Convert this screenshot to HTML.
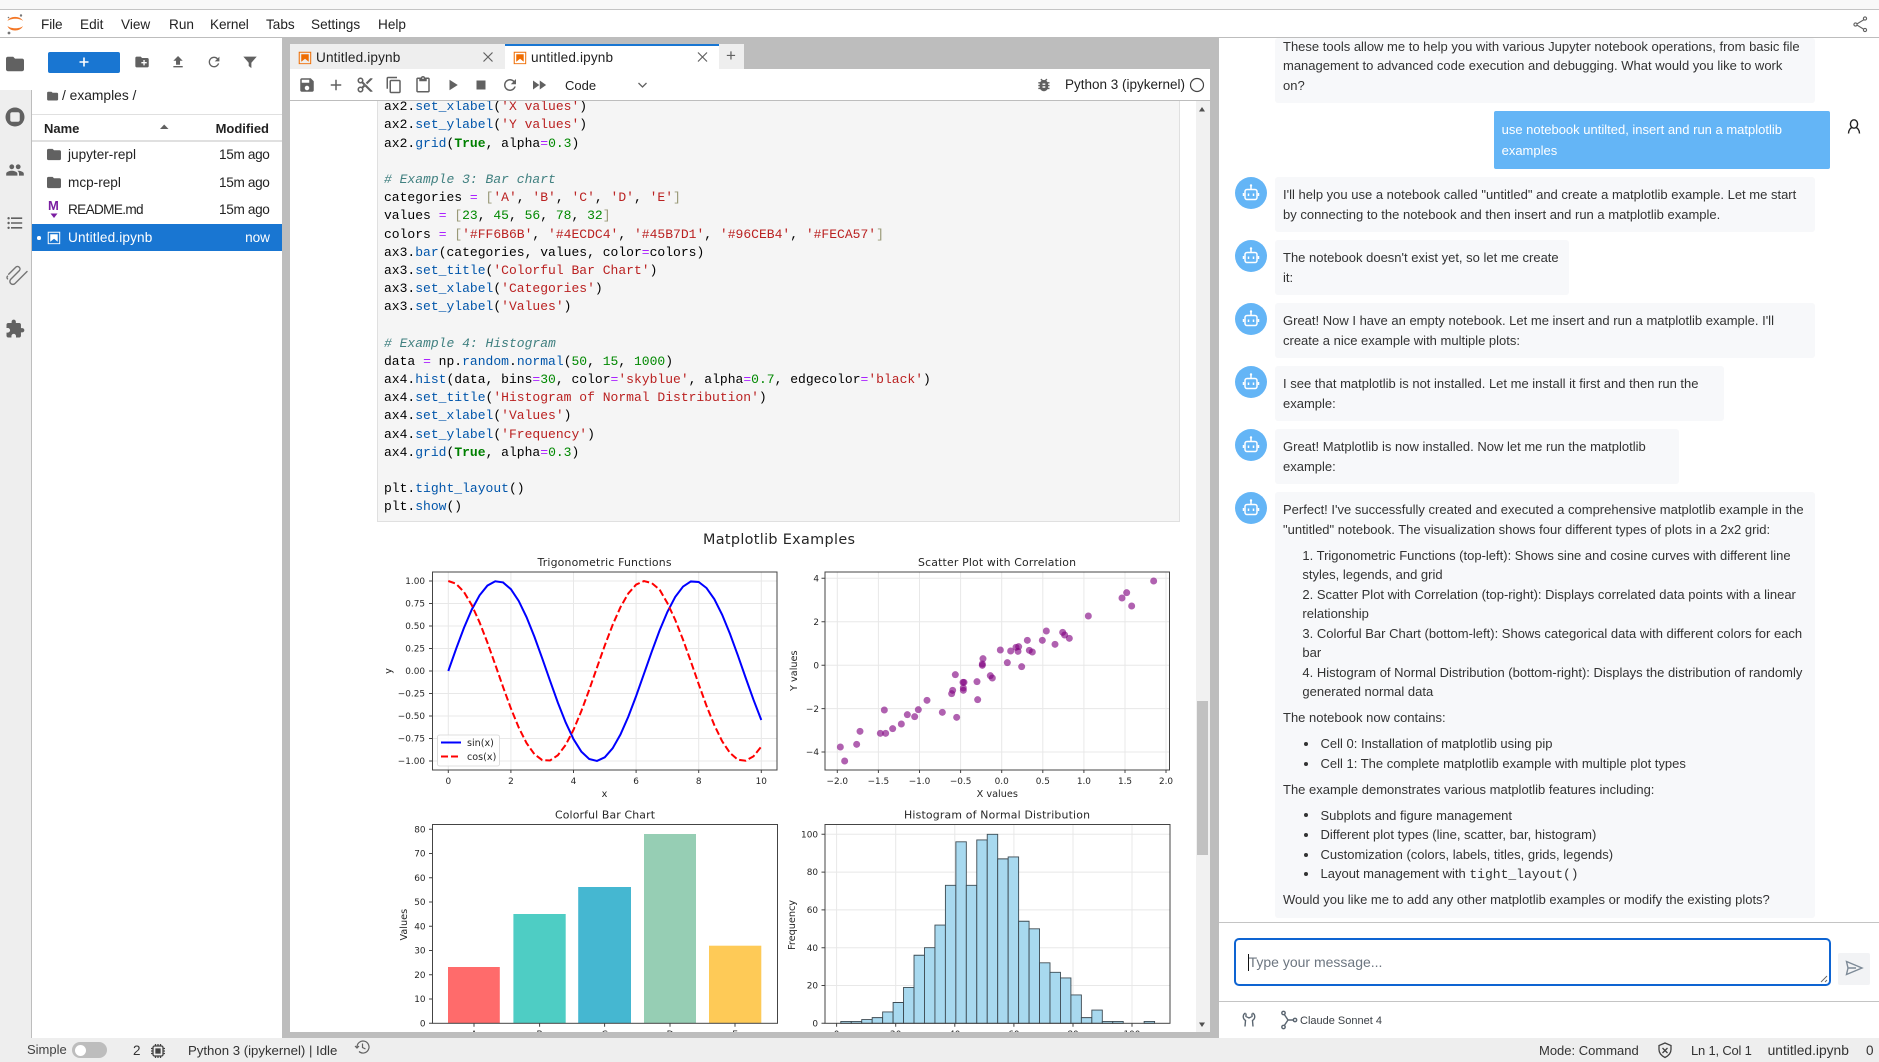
<!DOCTYPE html>
<html><head><meta charset="utf-8"><title>JupyterLab</title>
<style>
html,body{margin:0;padding:0;width:1879px;height:1062px;overflow:hidden;background:#fff}
body{font-family:"Liberation Sans",sans-serif;color:#222;position:relative}
.a{position:absolute}
.t{position:absolute;white-space:nowrap;line-height:20px;font-size:13.6px}
.r{text-align:right}
.m{position:absolute;white-space:nowrap;line-height:20px;font-size:13px;color:#333}
.b{position:absolute;background:#f7f8fa;border-radius:3px;left:1275px}
.av{position:absolute;left:1235px;width:32px;height:32px;border-radius:50%;background:#64b5f6}
pre{margin:0;font:13.02px/18.18px "Liberation Mono",monospace;color:#000}
.p{color:#05a}.o{color:#a2f}.n{color:#080}.s{color:#ba2121}.c{color:#408080;font-style:italic}.k{color:#008000;font-weight:bold}.q{color:#997}
svg text{font-family:"DejaVu Sans",sans-serif;fill:#262626}
</style></head><body>

<!-- chrome -->
<div class="a" style="left:0;top:0;width:1879px;height:9px;background:#f8f8f8"></div>
<div class="a" style="left:0;top:9px;width:1879px;height:1px;background:#c4c4c4"></div>
<div class="a" style="left:0;top:37px;width:1879px;height:1px;background:#bdbdbd"></div>
<div class="a" style="left:0;top:90px;width:31px;height:948px;background:#eee"></div>
<div class="a" style="left:31px;top:90px;width:1px;height:948px;background:#bdbdbd"></div>
<div class="a" style="left:282px;top:38px;width:937px;height:1000px;background:#bdbdbd"></div>
<div class="a" style="left:0;top:1038px;width:1879px;height:24px;background:#eee"></div>

<!-- menu -->
<span class="t" style="left:41px;top:15px;letter-spacing:-.1px">File</span>
<span class="t" style="left:80px;top:15px">Edit</span>
<span class="t" style="left:121px;top:15px">View</span>
<span class="t" style="left:169px;top:15px">Run</span>
<span class="t" style="left:210px;top:15px;letter-spacing:-.1px">Kernel</span>
<span class="t" style="left:266px;top:15px">Tabs</span>
<span class="t" style="left:311px;top:15px">Settings</span>
<span class="t" style="left:378px;top:15px">Help</span>

<!-- file browser -->
<div class="a" style="left:48px;top:52px;width:72px;height:21px;background:#1976d2;border-radius:2px"></div>
<span class="t" style="left:62px;top:86px;font-size:13.8px">/ examples /</span>
<div class="a" style="left:32px;top:114px;width:250px;height:1px;background:#e0e0e0"></div>
<div class="a" style="left:32px;top:140px;width:250px;height:2px;background:#e0e0e0"></div>
<span class="t" style="left:44px;top:119px;font-weight:bold;font-size:13px">Name</span>
<span class="t r" style="left:180px;width:89px;top:119px;font-weight:bold;font-size:13px">Modified</span>
<span class="t" style="left:68px;top:144.5px">jupyter-repl</span><span class="t r" style="left:190px;width:79.5px;top:144.5px;letter-spacing:-.35px">15m ago</span>
<span class="t" style="left:68px;top:172.5px">mcp-repl</span><span class="t r" style="left:190px;width:79.5px;top:172.5px;letter-spacing:-.35px">15m ago</span>
<span class="t" style="left:68px;top:199.5px;letter-spacing:-.65px">README.md</span><span class="t r" style="left:190px;width:79.5px;top:199.5px;letter-spacing:-.35px">15m ago</span>
<span class="t" style="left:48px;top:196px;font-size:13px;font-weight:bold;color:#7b1fa2">M</span>
<div class="a" style="left:32px;top:224px;width:250px;height:27px;background:#1976d2"></div>
<span class="t" style="left:68px;top:228px;color:#fff;letter-spacing:.15px">Untitled.ipynb</span><span class="t r" style="left:190px;width:80px;top:228px;color:#fff">now</span>
<div class="a" style="left:37px;top:236px;width:3.5px;height:3.5px;border-radius:50%;background:#fff"></div>

<!-- main -->
<div class="a" style="left:290px;top:44px;width:215px;height:25px;background:#eee"></div>
<div class="a" style="left:505px;top:44px;width:214px;height:25px;background:#fff;border-top:2px solid #1976d2;box-sizing:border-box"></div>
<div class="a" style="left:719px;top:44px;width:25px;height:25px;background:#eee"></div>
<span class="t" style="left:316px;top:47.5px;letter-spacing:.15px">Untitled.ipynb</span>
<span class="t" style="left:531px;top:47.5px;letter-spacing:.15px">untitled.ipynb</span>
<span class="t" style="left:726px;top:46px;font-size:17px;color:#616161">+</span>
<div class="a" style="left:290px;top:69px;width:920px;height:963px;background:#fff"></div>
<div class="a" style="left:290px;top:100px;width:920px;height:1px;background:#bdbdbd"></div>
<span class="t" style="left:565px;top:75.5px;font-size:13px">Code</span>
<span class="t" style="left:1065px;top:75px;font-size:13.5px">Python 3 (ipykernel)</span>

<!-- scrollbar -->
<div class="a" style="left:1196px;top:101px;width:14px;height:931px;background:#f1f1f1"></div>
<div class="a" style="left:1197px;top:701px;width:11px;height:154px;background:#c1c1c1"></div>

<!-- cell -->
<div class="a" style="left:377px;top:101px;width:801px;height:420px;background:#f5f5f5;border:1px solid #e0e0e0;border-top:0;overflow:hidden;box-sizing:content-box">
<pre style="position:absolute;left:6px;top:-2.8px">ax2.<span class="p">set_xlabel</span>(<span class="s">'X values'</span>)
ax2.<span class="p">set_ylabel</span>(<span class="s">'Y values'</span>)
ax2.<span class="p">grid</span>(<span class="k">True</span>, alpha<span class="o">=</span><span class="n">0.3</span>)

<span class="c"># Example 3: Bar chart</span>
categories <span class="o">=</span> <span class="q">[</span><span class="s">'A'</span>, <span class="s">'B'</span>, <span class="s">'C'</span>, <span class="s">'D'</span>, <span class="s">'E'</span><span class="q">]</span>
values <span class="o">=</span> <span class="q">[</span><span class="n">23</span>, <span class="n">45</span>, <span class="n">56</span>, <span class="n">78</span>, <span class="n">32</span><span class="q">]</span>
colors <span class="o">=</span> <span class="q">[</span><span class="s">'#FF6B6B'</span>, <span class="s">'#4ECDC4'</span>, <span class="s">'#45B7D1'</span>, <span class="s">'#96CEB4'</span>, <span class="s">'#FECA57'</span><span class="q">]</span>
ax3.<span class="p">bar</span>(categories, values, color<span class="o">=</span>colors)
ax3.<span class="p">set_title</span>(<span class="s">'Colorful Bar Chart'</span>)
ax3.<span class="p">set_xlabel</span>(<span class="s">'Categories'</span>)
ax3.<span class="p">set_ylabel</span>(<span class="s">'Values'</span>)

<span class="c"># Example 4: Histogram</span>
data <span class="o">=</span> np.<span class="p">random</span>.<span class="p">normal</span>(<span class="n">50</span>, <span class="n">15</span>, <span class="n">1000</span>)
ax4.<span class="p">hist</span>(data, bins<span class="o">=</span><span class="n">30</span>, color<span class="o">=</span><span class="s">'skyblue'</span>, alpha<span class="o">=</span><span class="n">0.7</span>, edgecolor<span class="o">=</span><span class="s">'black'</span>)
ax4.<span class="p">set_title</span>(<span class="s">'Histogram of Normal Distribution'</span>)
ax4.<span class="p">set_xlabel</span>(<span class="s">'Values'</span>)
ax4.<span class="p">set_ylabel</span>(<span class="s">'Frequency'</span>)
ax4.<span class="p">grid</span>(<span class="k">True</span>, alpha<span class="o">=</span><span class="n">0.3</span>)

plt.<span class="p">tight_layout</span>()
plt.<span class="p">show</span>()</pre>
</div>

<!-- plots -->
<svg class="a" style="left:377px;top:522px" width="819" height="510" viewBox="377 522 819 510">
<text x="779" y="544" font-size="14.4" text-anchor="middle" textLength="152">Matplotlib Examples</text>
<g font-size="10.9" text-anchor="middle">
<text x="604.5" y="566" textLength="134">Trigonometric Functions</text>
<text x="997" y="566" textLength="158">Scatter Plot with Correlation</text>
<text x="605" y="818.5" textLength="100">Colorful Bar Chart</text>
<text x="997" y="818.5" textLength="186">Histogram of Normal Distribution</text>
</g>
<!-- grids -->
<g stroke="#e8e8e8" stroke-width="1">
<path d="M448.3 572V770M510.9 572V770M573.5 572V770M636.1 572V770M698.7 572V770M761.3 572V770M432 581H777M432 603.5H777M432 626H777M432 648.5H777M432 671H777M432 693.5H777M432 716H777M432 738.5H777M432 761H777"/>
<path d="M837.3 572V770M878.4 572V770M919.5 572V770M960.6 572V770M1001.7 572V770M1042.8 572V770M1083.9 572V770M1125 572V770M1166 572V770M825 578.3H1169M825 621.7H1169M825 665.2H1169M825 708.6H1169M825 752H1169"/>
<path d="M836.6 824V1023M895.7 824V1023M954.8 824V1023M1013.9 824V1023M1073 824V1023M1132 824V1023M825 985.5H1170M825 947.7H1170M825 909.9H1170M825 872.1H1170M825 834.3H1170"/>
</g>
<!-- trig -->
<g transform="translate(448.3 671) scale(31.3 -90)" fill="none">
<polyline vector-effect="non-scaling-stroke" stroke="#0000ff" stroke-width="2" points="0,0 .25,.247 .5,.479 .75,.682 1,.841 1.25,.949 1.5,.997 1.75,.984 2,.909 2.25,.778 2.5,.598 2.75,.382 3,.141 3.25,-.108 3.5,-.351 3.75,-.572 4,-.757 4.25,-.895 4.5,-.978 4.75,-.999 5,-.959 5.25,-.859 5.5,-.706 5.75,-.508 6,-.279 6.25,-.033 6.5,.215 6.75,.45 7,.657 7.25,.823 7.5,.938 7.75,.995 8,.989 8.25,.922 8.5,.798 8.75,.625 9,.412 9.25,.174 9.5,-.075 9.75,-.319 10,-.544"/>
<polyline vector-effect="non-scaling-stroke" stroke="#ff0000" stroke-width="2" stroke-dasharray="7 3" points="0,1 .25,.969 .5,.878 .75,.732 1,.54 1.25,.315 1.5,.071 1.75,-.178 2,-.416 2.25,-.628 2.5,-.801 2.75,-.924 3,-.99 3.25,-.994 3.5,-.936 3.75,-.821 4,-.654 4.25,-.446 4.5,-.211 4.75,.038 5,.284 5.25,.512 5.5,.709 5.75,.861 6,.96 6.25,.999 6.5,.977 6.75,.905 7,.754 7.25,.568 7.5,.347 7.75,.105 8,-.146 8.25,-.388 8.5,-.602 8.75,-.781 9,-.911 9.25,-.985 9.5,-.997 9.75,-.948 10,-.839"/>
</g>
<rect x="437.5" y="735" width="62" height="31" rx="2" fill="#fff" fill-opacity=".85" stroke="#d5d5d5" stroke-width=".8"/>
<path d="M441 742.5H461" stroke="#00f" stroke-width="2"/>
<path d="M441 756.5H461" stroke="#f00" stroke-width="2" stroke-dasharray="7 3"/>
<g font-size="9.6"><text x="467" y="746">sin(x)</text><text x="467" y="760">cos(x)</text></g>
<!-- scatter -->
<g transform="translate(780 520) scale(.33333)" fill="#800080" fill-opacity=".62">
<circle cx="1121" cy="183" r="10.5"/><circle cx="1040" cy="218" r="10.5"/><circle cx="1026" cy="234" r="10.5"/><circle cx="1055" cy="258" r="10.5"/><circle cx="925" cy="288" r="10.5"/><circle cx="799" cy="333" r="10.5"/><circle cx="848" cy="337" r="10.5"/><circle cx="854" cy="345" r="10.5"/><circle cx="868" cy="355" r="10.5"/><circle cx="742" cy="361" r="10.5"/><circle cx="787" cy="361" r="10.5"/><circle cx="825" cy="373" r="10.5"/><circle cx="661" cy="390" r="10.5"/><circle cx="692" cy="393" r="10.5"/><circle cx="708" cy="382" r="10.5"/><circle cx="716" cy="380" r="10.5"/><circle cx="714" cy="394" r="10.5"/><circle cx="748" cy="391" r="10.5"/><circle cx="757" cy="396" r="10.5"/><circle cx="609" cy="416" r="10.5"/><circle cx="682" cy="428" r="10.5"/><circle cx="607" cy="432" r="10.5"/><circle cx="607" cy="436" r="10.5"/><circle cx="725" cy="440" r="10.5"/><circle cx="526" cy="464" r="10.5"/><circle cx="631" cy="467" r="10.5"/><circle cx="637" cy="474" r="10.5"/><circle cx="591" cy="485" r="10.5"/><circle cx="549" cy="487" r="10.5"/><circle cx="552" cy="487" r="10.5"/><circle cx="550" cy="504" r="10.5"/><circle cx="550" cy="511" r="10.5"/><circle cx="518" cy="511" r="10.5"/><circle cx="515" cy="521" r="10.5"/><circle cx="593" cy="539" r="10.5"/><circle cx="441" cy="541" r="10.5"/><circle cx="313" cy="570" r="10.5"/><circle cx="415" cy="569" r="10.5"/><circle cx="487" cy="577" r="10.5"/><circle cx="382" cy="584" r="10.5"/><circle cx="404" cy="590" r="10.5"/><circle cx="530" cy="592" r="10.5"/><circle cx="364" cy="612" r="10.5"/><circle cx="338" cy="626" r="10.5"/><circle cx="240" cy="634" r="10.5"/><circle cx="301" cy="640" r="10.5"/><circle cx="317" cy="640" r="10.5"/><circle cx="230" cy="673" r="10.5"/><circle cx="181" cy="681" r="10.5"/><circle cx="194" cy="723" r="10.5"/>
</g>
<!-- bars -->
<rect x="448" y="967" width="51.8" height="56.3" fill="#FF6B6B"/>
<rect x="513.4" y="914" width="52.3" height="109.3" fill="#4ECDC4"/>
<rect x="578.2" y="887" width="52.8" height="136.3" fill="#45B7D1"/>
<rect x="644" y="834" width="52" height="189.3" fill="#96CEB4"/>
<rect x="709" y="945.7" width="52.3" height="77.6" fill="#FECA57"/>
<!-- hist -->
<g transform="translate(840.8 1023.3) scale(10.46 -1.89)" fill="#a8d9ef" stroke="#3c4a52">
<g stroke-width=".9">
<rect vector-effect="non-scaling-stroke" x="0" width="1" height="1"/><rect vector-effect="non-scaling-stroke" x="1" width="1" height="1"/><rect vector-effect="non-scaling-stroke" x="2" width="1" height="2"/><rect vector-effect="non-scaling-stroke" x="3" width="1" height="3"/><rect vector-effect="non-scaling-stroke" x="4" width="1" height="6"/><rect vector-effect="non-scaling-stroke" x="5" width="1" height="11"/><rect vector-effect="non-scaling-stroke" x="6" width="1" height="19"/><rect vector-effect="non-scaling-stroke" x="7" width="1" height="36"/><rect vector-effect="non-scaling-stroke" x="8" width="1" height="40"/><rect vector-effect="non-scaling-stroke" x="9" width="1" height="52"/><rect vector-effect="non-scaling-stroke" x="10" width="1" height="73"/><rect vector-effect="non-scaling-stroke" x="11" width="1" height="96"/><rect vector-effect="non-scaling-stroke" x="12" width="1" height="73"/><rect vector-effect="non-scaling-stroke" x="13" width="1" height="97"/><rect vector-effect="non-scaling-stroke" x="14" width="1" height="100"/><rect vector-effect="non-scaling-stroke" x="15" width="1" height="87"/><rect vector-effect="non-scaling-stroke" x="16" width="1" height="88"/><rect vector-effect="non-scaling-stroke" x="17" width="1" height="54"/><rect vector-effect="non-scaling-stroke" x="18" width="1" height="50"/><rect vector-effect="non-scaling-stroke" x="19" width="1" height="32"/><rect vector-effect="non-scaling-stroke" x="20" width="1" height="27"/><rect vector-effect="non-scaling-stroke" x="21" width="1" height="24"/><rect vector-effect="non-scaling-stroke" x="22" width="1" height="15"/><rect vector-effect="non-scaling-stroke" x="23" width="1" height="3"/><rect vector-effect="non-scaling-stroke" x="24" width="1" height="7"/><rect vector-effect="non-scaling-stroke" x="25" width="1" height="1"/><rect vector-effect="non-scaling-stroke" x="26" width="1" height="1"/><rect vector-effect="non-scaling-stroke" x="29" width="1" height="1"/>
</g></g>
<!-- frames -->
<g fill="none" stroke="#444" stroke-width="1">
<rect x="432.5" y="572" width="344.5" height="198"/>
<rect x="825" y="572" width="344.5" height="198"/>
<rect x="432.5" y="824.5" width="345" height="198.8"/>
<rect x="825" y="824.5" width="345" height="198.8"/>
<path d="M448.3 770v3M510.9 770v3M573.5 770v3M636.1 770v3M698.7 770v3M761.3 770v3M429 581h3.5M429 603.5h3.5M429 626h3.5M429 648.5h3.5M429 671h3.5M429 693.5h3.5M429 716h3.5M429 738.5h3.5M429 761h3.5"/>
<path d="M837.3 770v3M878.4 770v3M919.5 770v3M960.6 770v3M1001.7 770v3M1042.8 770v3M1083.9 770v3M1125 770v3M1166 770v3M821.5 578.3h3.5M821.5 621.7h3.5M821.5 665.2h3.5M821.5 708.6h3.5M821.5 752h3.5"/>
<path d="M429 1023.3h3.5M429 999h3.5M429 974.8h3.5M429 950.5h3.5M429 926.3h3.5M429 902h3.5M429 877.8h3.5M429 853.5h3.5M429 829.3h3.5M474 1023.3v3.5M539.6 1023.3v3.5M604.6 1023.3v3.5M670 1023.3v3.5M735 1023.3v3.5"/>
<path d="M821.5 1023.3h3.5M821.5 985.5h3.5M821.5 947.7h3.5M821.5 909.9h3.5M821.5 872.1h3.5M821.5 834.3h3.5M836.6 1023.3v3.5M895.7 1023.3v3.5M954.8 1023.3v3.5M1013.9 1023.3v3.5M1073 1023.3v3.5M1132 1023.3v3.5"/>
</g>
<!-- tick labels -->
<g font-size="8.9" text-anchor="end">
<text x="425" y="584">1.00</text><text x="425" y="606.5">0.75</text><text x="425" y="629">0.50</text><text x="425" y="651.5">0.25</text><text x="425" y="674">0.00</text><text x="425" y="696.5">−0.25</text><text x="425" y="719">−0.50</text><text x="425" y="741.5">−0.75</text><text x="425" y="764">−1.00</text>
<text x="819" y="581.5">4</text><text x="819" y="625">2</text><text x="819" y="668.5">0</text><text x="819" y="712">−2</text><text x="819" y="755">−4</text>
<text x="425.5" y="1026.5">0</text><text x="425.5" y="1002">10</text><text x="425.5" y="978">20</text><text x="425.5" y="953.5">30</text><text x="425.5" y="929.5">40</text><text x="425.5" y="905">50</text><text x="425.5" y="881">60</text><text x="425.5" y="856.5">70</text><text x="425.5" y="832.5">80</text>
<text x="818" y="1026.5">0</text><text x="818" y="988.5">20</text><text x="818" y="951">40</text><text x="818" y="913">60</text><text x="818" y="875">80</text><text x="818" y="837.5">100</text>
</g>
<g font-size="8.9" text-anchor="middle">
<text x="448.3" y="784">0</text><text x="510.9" y="784">2</text><text x="573.5" y="784">4</text><text x="636.1" y="784">6</text><text x="698.7" y="784">8</text><text x="761.3" y="784">10</text>
<text x="837.3" y="784">−2.0</text><text x="878.4" y="784">−1.5</text><text x="919.5" y="784">−1.0</text><text x="960.6" y="784">−0.5</text><text x="1001.7" y="784">0.0</text><text x="1042.8" y="784">0.5</text><text x="1083.9" y="784">1.0</text><text x="1125" y="784">1.5</text><text x="1166" y="784">2.0</text>
<text x="474" y="1037">A</text><text x="539.6" y="1037">B</text><text x="604.6" y="1037">C</text><text x="670" y="1037">D</text><text x="735" y="1037">E</text>
<text x="836.6" y="1037">0</text><text x="895.7" y="1037">20</text><text x="954.8" y="1037">40</text><text x="1013.9" y="1037">60</text><text x="1073" y="1037">80</text><text x="1132" y="1037">100</text>
</g>
<g font-size="9.7" text-anchor="middle">
<text x="604.5" y="797">x</text><text x="997.3" y="797">X values</text>
<text transform="translate(391.5 671) rotate(-90)">y</text>
<text transform="translate(797 670.7) rotate(-90)">Y values</text>
<text transform="translate(407 924.7) rotate(-90)">Values</text>
<text transform="translate(795 925) rotate(-90)">Frequency</text>
</g>
</svg>

<!-- right panel -->
<div class="a" style="left:1219px;top:38px;width:660px;height:1000px;background:#fff"></div>
<div class="b" style="top:38px;width:540px;height:64.7px"></div>
<span class="m" style="left:1283px;top:37px">These tools allow me to help you with various Jupyter notebook operations, from basic file</span>
<span class="m" style="left:1283px;top:56px">management to advanced code execution and debugging. What would you like to work</span>
<span class="m" style="left:1283px;top:76px">on?</span>
<div class="a" style="left:1494px;top:111px;width:336px;height:58px;background:#64b5f6;border-radius:2px"></div>
<span class="m" style="left:1501.6px;top:120px;color:#fff">use notebook untilted, insert and run a matplotlib</span>
<span class="m" style="left:1501.6px;top:141px;color:#fff">examples</span>

<div class="av" style="top:177px"></div><div class="b" style="top:177px;width:540px;height:55px"></div>
<span class="m" style="left:1283px;top:185px">I'll help you use a notebook called "untitled" and create a matplotlib example. Let me start</span>
<span class="m" style="left:1283px;top:205px">by connecting to the notebook and then insert and run a matplotlib example.</span>

<div class="av" style="top:240px"></div><div class="b" style="top:240px;width:294px;height:55px"></div>
<span class="m" style="left:1283px;top:248px">The notebook doesn't exist yet, so let me create</span>
<span class="m" style="left:1283px;top:268px">it:</span>

<div class="av" style="top:303px"></div><div class="b" style="top:303px;width:540px;height:55px"></div>
<span class="m" style="left:1283px;top:311px">Great! Now I have an empty notebook. Let me insert and run a matplotlib example. I'll</span>
<span class="m" style="left:1283px;top:331px">create a nice example with multiple plots:</span>

<div class="av" style="top:366px"></div><div class="b" style="top:366px;width:449px;height:55px"></div>
<span class="m" style="left:1283px;top:374px">I see that matplotlib is not installed. Let me install it first and then run the</span>
<span class="m" style="left:1283px;top:394px">example:</span>

<div class="av" style="top:429px"></div><div class="b" style="top:429px;width:404px;height:55px"></div>
<span class="m" style="left:1283px;top:437px">Great! Matplotlib is now installed. Now let me run the matplotlib</span>
<span class="m" style="left:1283px;top:457px">example:</span>

<div class="av" style="top:492px"></div><div class="b" style="top:492px;width:540px;height:425.6px"></div>
<span class="m" style="left:1283px;top:500px">Perfect! I've successfully created and executed a comprehensive matplotlib example in the</span>
<span class="m" style="left:1283px;top:519.5px">"untitled" notebook. The visualization shows four different types of plots in a 2x2 grid:</span>
<span class="m" style="left:1302.4px;top:546px">1. Trigonometric Functions (top-left): Shows sine and cosine curves with different line</span>
<span class="m" style="left:1302.4px;top:565px">styles, legends, and grid</span>
<span class="m" style="left:1302.4px;top:585px">2. Scatter Plot with Correlation (top-right): Displays correlated data points with a linear</span>
<span class="m" style="left:1302.4px;top:604px">relationship</span>
<span class="m" style="left:1302.4px;top:624px">3. Colorful Bar Chart (bottom-left): Shows categorical data with different colors for each</span>
<span class="m" style="left:1302.4px;top:643px">bar</span>
<span class="m" style="left:1302.4px;top:662.5px">4. Histogram of Normal Distribution (bottom-right): Displays the distribution of randomly</span>
<span class="m" style="left:1302.4px;top:682px">generated normal data</span>
<span class="m" style="left:1283px;top:708px">The notebook now contains:</span>
<span class="m" style="left:1320.5px;top:734px">Cell 0: Installation of matplotlib using pip</span>
<span class="m" style="left:1320.5px;top:754px">Cell 1: The complete matplotlib example with multiple plot types</span>
<span class="m" style="left:1283px;top:780px">The example demonstrates various matplotlib features including:</span>
<span class="m" style="left:1320.5px;top:805.5px">Subplots and figure management</span>
<span class="m" style="left:1320.5px;top:825px">Different plot types (line, scatter, bar, histogram)</span>
<span class="m" style="left:1320.5px;top:845px">Customization (colors, labels, titles, grids, legends)</span>
<span class="m" style="left:1320.5px;top:864px">Layout management with <span style="font:13px 'Liberation Mono',monospace">tight_layout()</span></span>
<span class="m" style="left:1283px;top:890px">Would you like me to add any other matplotlib examples or modify the existing plots?</span>

<div class="a" style="left:1304px;top:742px;width:4px;height:4px;border-radius:50%;background:#333"></div>
<div class="a" style="left:1304px;top:762px;width:4px;height:4px;border-radius:50%;background:#333"></div>
<div class="a" style="left:1304px;top:813px;width:4px;height:4px;border-radius:50%;background:#333"></div>
<div class="a" style="left:1304px;top:833px;width:4px;height:4px;border-radius:50%;background:#333"></div>
<div class="a" style="left:1304px;top:853px;width:4px;height:4px;border-radius:50%;background:#333"></div>
<div class="a" style="left:1304px;top:872px;width:4px;height:4px;border-radius:50%;background:#333"></div>

<div class="a" style="left:1219px;top:922px;width:660px;height:1px;background:#c4c4c4"></div>
<div class="a" style="left:1234px;top:938px;width:597px;height:48px;box-sizing:border-box;border:2px solid #0e64d2;border-radius:5px;background:#fff"></div>
<span class="m" style="left:1248.6px;top:952px;font-size:14px;color:#6d7680">Type your message...</span>
<div class="a" style="left:1248px;top:954px;width:1px;height:17px;background:#111"></div>
<div class="a" style="left:1838px;top:953px;width:32px;height:32px;background:#f2f3f5;border-radius:2px"></div>
<div class="a" style="left:1219px;top:1001px;width:660px;height:1px;background:#c4c4c4"></div>
<span class="m" style="left:1300px;top:1010.5px;font-size:11px;color:#3a3f45">Claude Sonnet 4</span>

<!-- status -->
<span class="t" style="left:27px;top:1039.5px;font-size:13px;color:#424242">Simple</span>
<div class="a" style="left:72px;top:1042px;width:35px;height:16px;border-radius:8px;background:#bdbdbd"></div>
<div class="a" style="left:74.5px;top:1044.5px;width:11px;height:11px;border-radius:50%;background:#fff"></div>
<span class="t" style="left:133px;top:1041px;font-size:13.5px;color:#333">2</span>
<span class="t" style="left:188px;top:1041px;font-size:13.2px;color:#333">Python 3 (ipykernel) | Idle</span>
<span class="t" style="left:1539px;top:1040.5px;font-size:13px;color:#333">Mode: Command</span>
<span class="t" style="left:1691px;top:1040.5px;font-size:13px;color:#333;letter-spacing:-.2px">Ln 1, Col 1</span>
<span class="t" style="left:1767.6px;top:1040.5px;font-size:13.8px;color:#333">untitled.ipynb</span>
<span class="t" style="left:1866px;top:1040.5px;font-size:13.5px;color:#333">0</span>

<!-- icon overlay -->
<svg class="a" style="left:0;top:0;pointer-events:none" width="1879" height="1062" viewBox="0 0 1879 1062">
<defs>
<symbol id="bot" viewBox="-16 -16 32 32" overflow="visible">
<g fill="none" stroke="#fff" stroke-width="1.5"><rect x="-6" y="-3.5" width="12" height="10" rx="2"/><path d="M0-3.500V-7M-7.500 0v3M7.500 0v3"/></g>
<circle cy="-7.5" r="1.2" fill="#fff"/><path d="M-2.500 0.500v2.500M2.500 0.500v2.500" stroke="#fff" stroke-width="1.5"/>
</symbol>
<path id="nb" d="M18.7 3.3v15.4H3.3V3.3h15.4m1.5-1.5H1.8v18.3h18.3l.1-18.3zM16.5 16.5l-5.4-4.3-5.6 4.3v-11h11z"/>
<path id="fo" d="M10 4H4c-1.1 0-1.99.9-1.99 2L2 18c0 1.1.9 2 2 2h16c1.1 0 2-.9 2-2V8c0-1.1-.9-2-2-2h-8l-2-2z"/>
</defs>
<!-- logo -->
<path d="M7.5 21c2-5.500 13-5.500 15.500 0-3-3-12-3-15.500 0z" fill="#f37726"/>
<path d="M7.5 26c2 6 13 6 15.500 0-3 3-12 3-15.500 0z" fill="#f37726"/>
<circle cx="21" cy="15.5" r="1.2" fill="#767677"/><circle cx="9" cy="33" r="1.4" fill="#767677"/><circle cx="8.5" cy="17.5" r=".8" fill="#767677"/>
<!-- share -->
<g fill="none" stroke="#616161" stroke-width="1.1"><path d="M1865 19l-9 5.500 9 5.500"/><circle cx="1865" cy="18.5" r="1.6" fill="#fff"/><circle cx="1855.5" cy="24.5" r="1.6" fill="#fff"/><circle cx="1865" cy="30" r="1.6" fill="#fff"/></g>
<!-- sidebar -->
<g fill="#616161">
<use href="#fo" transform="translate(4.2 53.2) scale(.9)"/>
<path transform="translate(3.6 105.6) scale(.95)" fill-rule="evenodd" d="M12 2a10 10 0 1 0 0 20 10 10 0 0 0 0-20zM9 7h6a2 2 0 0 1 2 2v6a2 2 0 0 1-2 2H9a2 2 0 0 1-2-2V9a2 2 0 0 1 2-2z"/>
<path transform="translate(5.4 160.4) scale(.8)" d="M16 11c1.66 0 2.99-1.34 2.99-3S17.66 5 16 5c-1.66 0-3 1.34-3 3s1.34 3 3 3zm-8 0c1.66 0 2.99-1.34 2.99-3S9.66 5 8 5C6.34 5 5 6.34 5 8s1.34 3 3 3zm0 2c-2.33 0-7 1.17-7 3.5V19h14v-2.5c0-2.33-4.67-3.5-7-3.5zm8 0c-.29 0-.62.02-.97.05 1.16.84 1.97 1.97 1.97 3.45V19h6v-2.5c0-2.33-4.67-3.5-7-3.5z"/>
<path transform="translate(5.4 213.4) scale(.8)" d="M4 10.5c-.83 0-1.5.67-1.5 1.5s.67 1.5 1.5 1.5 1.5-.67 1.5-1.5-.67-1.5-1.5-1.5zm0-6c-.83 0-1.5.67-1.5 1.5S3.17 7.5 4 7.5 5.5 6.83 5.5 6 4.83 4.5 4 4.5zm0 12c-.83 0-1.5.68-1.5 1.5s.68 1.5 1.5 1.5 1.5-.68 1.5-1.5-.67-1.5-1.5-1.5zM7 19h14v-2H7v2zm0-6h14v-2H7v2zm0-8v2h14V5H7z"/>
<path transform="translate(4.8 318.8) scale(.85)" d="M20.5 11H19V7c0-1.1-.9-2-2-2h-4V3.5C13 2.12 11.88 1 10.5 1S8 2.12 8 3.5V5H4c-1.1 0-1.99.9-1.99 2v3.8H3.5c1.49 0 2.7 1.21 2.7 2.7s-1.21 2.7-2.7 2.7H2V20c0 1.1.9 2 2 2h3.800v-1.500c0-1.49 1.21-2.7 2.7-2.7 1.49 0 2.7 1.21 2.7 2.7V22H17c1.1 0 2-.9 2-2v-4h1.5c1.38 0 2.5-1.12 2.5-2.5S21.88 11 20.5 11z"/>
</g>
<g transform="translate(15 275) rotate(-45)" fill="none" stroke="#757575" stroke-width="1.4" stroke-linecap="round"><path d="M11 6H-6A3 3 0 0 1-6 0H6A2.500 2.500 0 0 0 6-5H-4M-6-4.500A2 2 0 0 0-8-2.500"/></g>
<!-- fb toolbar -->
<path d="M84 57.5v9M79.5 62h9" stroke="#fff" stroke-width="1.6"/>
<g fill="#616161">
<path transform="translate(134 54) scale(.67)" d="M20 6h-8l-2-2H4c-1.11 0-1.99.89-1.99 2L2 18c0 1.11.89 2 2 2h16c1.11 0 2-.89 2-2V8c0-1.11-.89-2-2-2zm-1 8h-3v3h-2v-3h-3v-2h3V9h2v3h3v2z"/>
<path transform="translate(170 54) scale(.67)" d="M9 16h6v-6h4l-7-7-7 7h4zm-4 2h14v2H5z"/>
<path transform="translate(206 54) scale(.67)" d="M17.65 6.35C16.2 4.9 14.21 4 12 4c-4.42 0-7.99 3.58-7.99 8s3.57 8 7.99 8c3.73 0 6.84-2.55 7.73-6h-2.08c-.82 2.33-3.04 4-5.65 4-3.31 0-6-2.69-6-6s2.69-6 6-6c1.66 0 3.14.69 4.22 1.78L13 11h7V4l-2.35 2.35z"/>
<path transform="translate(242 54) scale(.67)" d="M2 4h20l-8 9v8l-4-3v-5z"/>
<use href="#fo" transform="translate(46 89.5) scale(.55)"/>
<path d="M160 129l4.200-4.500 4.300 4.500z"/>
<use href="#fo" transform="translate(45.6 146.1) scale(.7)"/>
<use href="#fo" transform="translate(45.6 174.1) scale(.7)"/>
</g>
<path d="M50.5 213.5h7l-3.500 4.500z" fill="#7b1fa2"/>
<use href="#nb" fill="#fff" transform="translate(46.5 230.5) scale(.68)"/>
<!-- tabs -->
<use href="#nb" fill="#ef6c00" transform="translate(297.5 50.5) scale(.68)"/>
<use href="#nb" fill="#ef6c00" transform="translate(512.5 50.5) scale(.68)"/>
<path d="M483.500 52.500l9 9M492.500 52.500l-9 9M698 52.500l9 9M707 52.500l-9 9" stroke="#616161" stroke-width="1.2"/>
<!-- nb toolbar -->
<g fill="#616161">
<path transform="translate(298 76) scale(.75)" d="M17 3H5c-1.11 0-2 .9-2 2v14c0 1.1.89 2 2 2h14c1.1 0 2-.9 2-2V7l-4-4zm-5 16c-1.66 0-3-1.34-3-3s1.34-3 3-3 3 1.34 3 3-1.34 3-3 3zm3-10H5V5h10v4z"/>
<path transform="translate(327 76) scale(.75)" d="M19 13h-6v6h-2v-6H5v-2h6V5h2v6h6v2z"/>
<path transform="translate(356 76) scale(.75)" d="M9.64 7.64c.23-.5.36-1.05.36-1.64 0-2.21-1.79-4-4-4S2 3.79 2 6s1.79 4 4 4c.59 0 1.14-.13 1.64-.36L10 12l-2.360 2.360C7.14 14.13 6.59 14 6 14c-2.21 0-4 1.79-4 4s1.79 4 4 4 4-1.79 4-4c0-.59-.13-1.14-.36-1.64L12 14l7 7h3v-1L9.64 7.64zM6 8c-1.1 0-2-.89-2-2s.9-2 2-2 2 .89 2 2-.9 2-2 2zm0 12c-1.1 0-2-.89-2-2s.9-2 2-2 2 .89 2 2-.9 2-2 2zm6-7.500c-.28 0-.5-.22-.5-.5s.22-.5.5-.5.5.22.5.5-.22.5-.5.5zM19 3l-6 6 2 2 7-7V3z"/>
<path transform="translate(385 76) scale(.75)" d="M16 1H4c-1.1 0-2 .9-2 2v14h2V3h12V1zm3 4H8c-1.1 0-2 .9-2 2v14c0 1.1.9 2 2 2h11c1.1 0 2-.9 2-2V7c0-1.1-.9-2-2-2zm0 16H8V7h11v14z"/>
<path transform="translate(414 76) scale(.75)" d="M19 2h-4.180C14.4.84 13.3 0 12 0c-1.3 0-2.4.84-2.82 2H5c-1.1 0-2 .9-2 2v16c0 1.1.9 2 2 2h14c1.1 0 2-.9 2-2V4c0-1.1-.9-2-2-2zm-7 0c.55 0 1 .45 1 1s-.45 1-1 1-1-.45-1-1 .45-1 1-1zm7 18H5V4h2v3h10V4h2v16z"/>
<path transform="translate(443.500 76) scale(.75)" d="M8 5v14l11-7z"/>
<path transform="translate(472 76) scale(.75)" d="M6 6h12v12H6z"/>
<path transform="translate(501 76) scale(.75)" d="M17.65 6.35C16.2 4.9 14.21 4 12 4c-4.42 0-7.99 3.58-7.99 8s3.57 8 7.99 8c3.73 0 6.84-2.55 7.73-6h-2.08c-.82 2.33-3.04 4-5.65 4-3.31 0-6-2.69-6-6s2.69-6 6-6c1.66 0 3.14.69 4.22 1.78L13 11h7V4l-2.35 2.35z"/>
<path transform="translate(530 76) scale(.75)" d="M4 18l8.500-6L4 6v12zm9-12v12l8.500-6L13 6z"/>
<path transform="translate(1035.500 76.500) scale(.7)" d="M20 8h-2.81c-.45-.78-1.07-1.45-1.82-1.96L17 4.41 15.59 3l-2.17 2.17C12.96 5.06 12.49 5 12 5c-.49 0-.96.06-1.41.17L8.41 3 7 4.41l1.62 1.63C7.88 6.55 7.26 7.22 6.81 8H4v2h2.09c-.05.33-.09.66-.09 1v1H4v2h2v1c0 .34.04.67.09 1H4v2h2.81c1.04 1.79 2.97 3 5.19 3s4.15-1.21 5.19-3H20v-2h-2.09c.05-.33.09-.66.09-1v-1h2v-2h-2v-1c0-.34-.04-.67-.09-1H20V8zm-6 8h-4v-2h4v2zm0-4h-4v-2h4v2z"/>
</g>
<path d="M638.500 83l4 4 4-4" fill="none" stroke="#616161" stroke-width="1.3"/>
<circle cx="1197" cy="85" r="6.5" fill="none" stroke="#444" stroke-width="1.2"/>
<!-- scrollbar arrows -->
<path d="M1199 111.500l3-4.500 3 4.500zM1199 1022.500l3 4.500 3-4.500z" fill="#505050"/>
<!-- bots -->
<use href="#bot" x="1235" y="177" width="32" height="32"/>
<use href="#bot" x="1235" y="240" width="32" height="32"/>
<use href="#bot" x="1235" y="303" width="32" height="32"/>
<use href="#bot" x="1235" y="366" width="32" height="32"/>
<use href="#bot" x="1235" y="429" width="32" height="32"/>
<use href="#bot" x="1235" y="492" width="32" height="32"/>
<!-- user -->
<g fill="none" stroke="#222" stroke-width="1.4"><ellipse cx="1854" cy="124" rx="3.6" ry="4.2"/><path d="M1848.500 133.500c0-3.500 2-5.500 3.500-6M1859.500 133.500c0-3.500-2-5.500-3.500-6"/></g>
<!-- send -->
<path d="M1846.500 961.500l15.500 6.500-15.500 6.500 1.500-6.500zM1848 968h8" fill="none" stroke="#7d8a97" stroke-width="1.4"/>
<path d="M1821 982l6-6M1825 982l2-2" stroke="#666" stroke-width=".9"/>
<!-- wrench & model -->
<g fill="none" stroke="#5a6570" stroke-width="1.4"><path d="M1245.500 1013c-3 1.500-3 5.500 0 7.500l-.5 6M1252.500 1013c3 1.500 3 5.500 0 7.500l.5 6M1246 1013.500v3l3 1.500 3-1.500v-3"/>
<path d="M1284 1014l4 6-4 6M1288 1020h5"/><circle cx="1283.500" cy="1013" r="1.700"/><circle cx="1283.500" cy="1027" r="1.700"/><circle cx="1295" cy="1020" r="1.700"/></g>
<!-- cpu -->
<g fill="none" stroke="#424242" stroke-width="1.3"><rect x="153" y="1046" width="10" height="10" rx="1.5"/><rect x="156" y="1049" width="4" height="4" fill="#424242"/><path d="M155.500 1044v2M158 1044v2M160.500 1044v2M155.500 1056v2M158 1056v2M160.500 1056v2M151 1048.500h2M151 1051h2M151 1053.500h2M163 1048.500h2M163 1051h2M163 1053.500h2"/></g>
<!-- history -->
<g fill="none" stroke="#616161" stroke-width="1.2"><path d="M357 1047a6 6 0 1 1 2 4.500M362.500 1043.500v4l3 1.500"/><path d="M355 1046l2 2 2-2"/></g>
<!-- shield -->
<g fill="none" stroke="#424242" stroke-width="1.3"><path d="M1665 1043l6 2.500v4c0 4-3 6.500-6 8-3-1.500-6-4-6-8v-4z"/><path d="M1662.500 1048l5 5M1667.500 1048l-5 5"/></g>
</svg>
</body></html>
